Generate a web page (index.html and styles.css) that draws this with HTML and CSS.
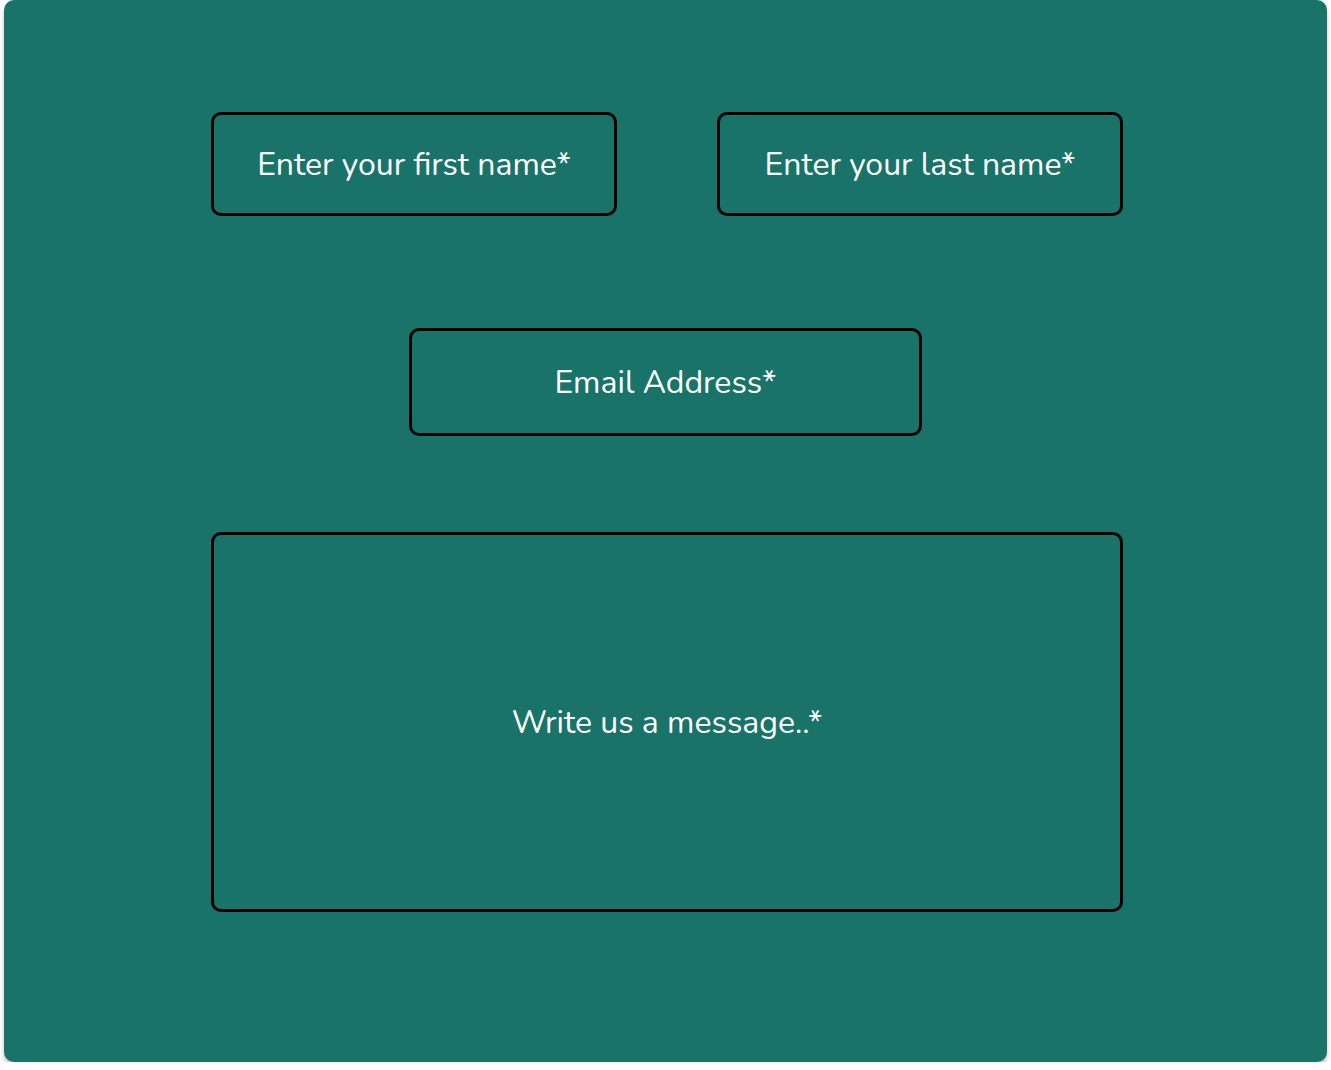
FILE: index.html
```html
<!DOCTYPE html>
<html lang="en">
<head>
<meta charset="utf-8">
<title>Contact form</title>
<link rel="stylesheet" href="styles.css">
</head>
<body>
<main class="panel">
  <form class="form">
    <div class="row">
      <div class="field field-name">Enter your first name*</div>
      <div class="field field-name">Enter your last name*</div>
    </div>
    <div class="field field-email">Email Address*</div>
    <div class="field field-message">Write us a message..*</div>
  </form>
</main>
</body>
</html>
```
FILE: styles.css
```css
html, body {
  margin: 0;
  padding: 0;
  background: #ffffff;
}
body {
  font-family: Nunito, Lato, "Noto Sans", sans-serif;
}
.panel {
  box-sizing: border-box;
  width: 1323px;
  height: 1062px;
  margin: 0 4px;
  background: #197368;
  border-radius: 10px;
  box-shadow: 0 4px 4px rgba(0, 0, 0, 0.25);
  padding-top: 112px;
}
.form {
  display: flex;
  flex-direction: column;
  align-items: center;
  padding-left: 3px;
}
.row {
  display: flex;
  gap: 100px;
}
.field {
  box-sizing: border-box;
  border: 3px solid #000;
  border-radius: 10px;
  display: flex;
  align-items: center;
  justify-content: center;
  color: #ffffff;
  font-size: 32px;
  line-height: 1;
}
.field-name {
  width: 406px;
  height: 104px;
  padding-top: 2px;
}
.field-email {
  width: 513px;
  height: 108px;
  margin-top: 112px;
  margin-left: -3px;
  padding-top: 2px;
}
.field-message {
  width: 912px;
  height: 380px;
  margin-top: 96px;
  padding-top: 2px;
}
```
